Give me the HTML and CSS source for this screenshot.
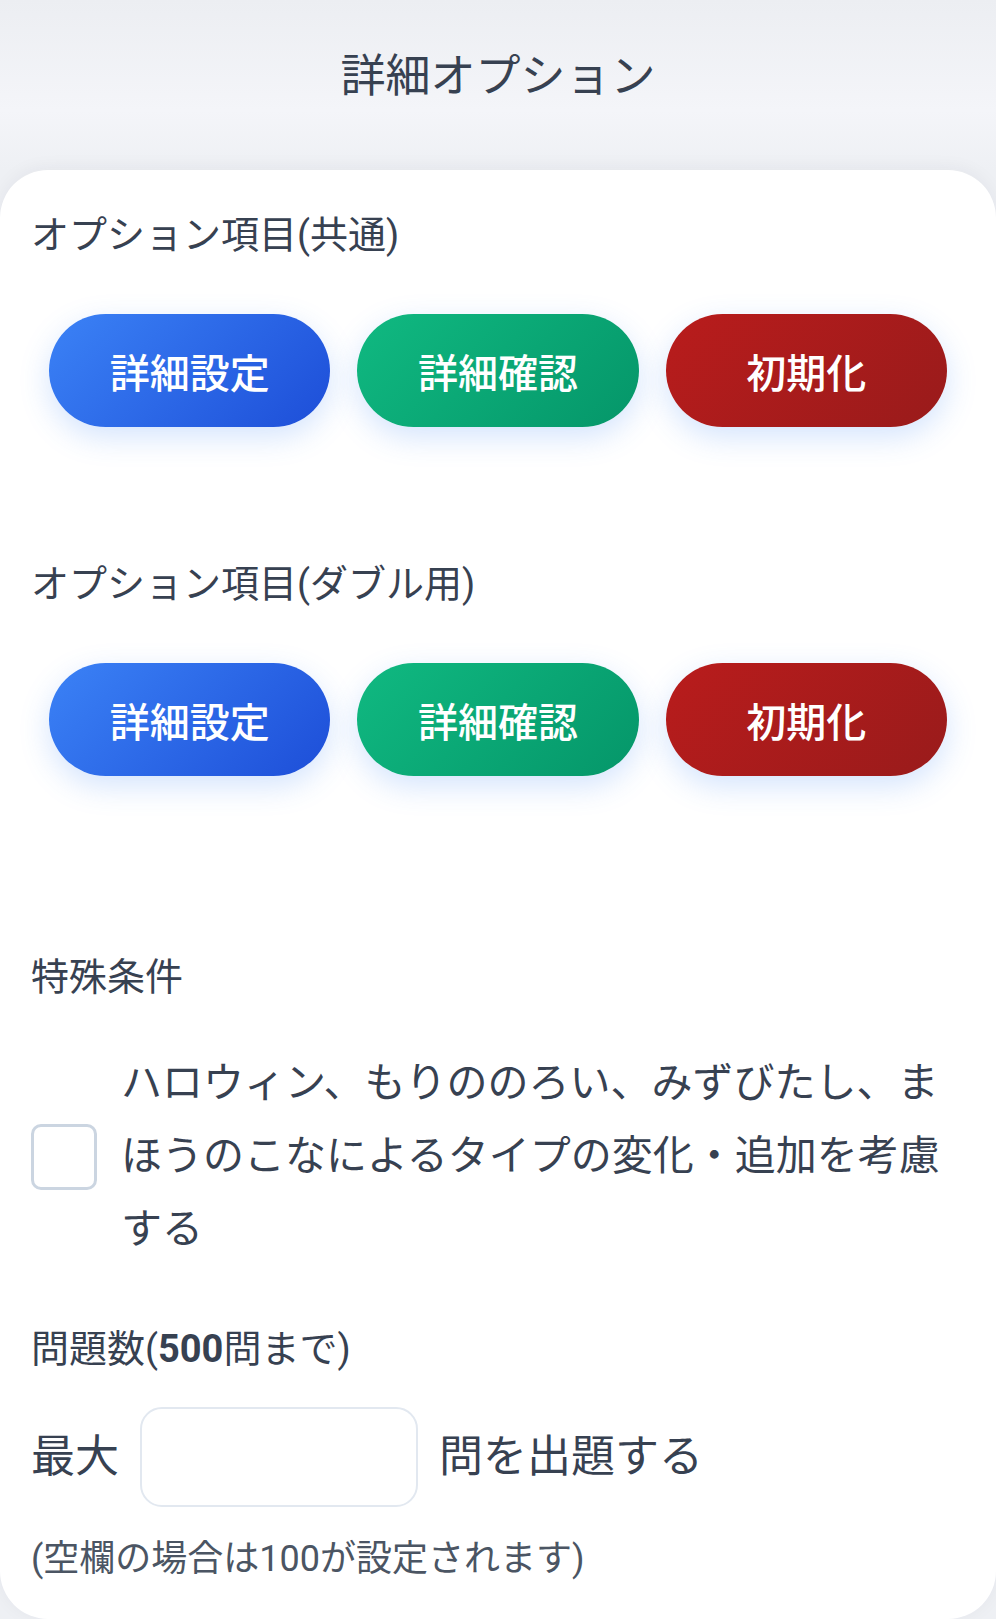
FILE: index.html
```html
<!DOCTYPE html>
<html lang="ja">
<head>
<meta charset="utf-8">
<title>詳細オプション</title>
<link rel="stylesheet" href="styles.css">
</head>
<body>
<header class="page-header">
  <h1 class="page-title">詳細オプション</h1>
</header>
<main class="card">
  <section class="option-block">
    <h2 class="section-label">オプション項目(共通)</h2>
    <div class="btn-row">
      <button class="btn btn-blue">詳細設定</button>
      <button class="btn btn-green">詳細確認</button>
      <button class="btn btn-red">初期化</button>
    </div>
  </section>
  <section class="option-block second">
    <h2 class="section-label">オプション項目(ダブル用)</h2>
    <div class="btn-row">
      <button class="btn btn-blue">詳細設定</button>
      <button class="btn btn-green">詳細確認</button>
      <button class="btn btn-red">初期化</button>
    </div>
  </section>
  <section class="special">
    <h2 class="section-label">特殊条件</h2>
    <label class="check-row">
      <input type="checkbox" class="check-box">
      <span class="check-text">ハロウィン、もりののろい、みずびたし、まほうのこなによるタイプの変化・追加を考慮する</span>
    </label>
  </section>
  <section class="count">
    <h2 class="section-label">問題数(<b>500</b>問まで)</h2>
    <div class="count-row">
      <span>最大</span>
      <input type="text" class="count-input">
      <span>問を出題する</span>
    </div>
    <p class="note">(空欄の場合は100が設定されます)</p>
  </section>
</main>
</body>
</html>
```

FILE: styles.css
```css
* { box-sizing: border-box; }

html, body {
  margin: 0;
  padding: 0;
}

body {
  font-family: Roboto, "Noto Sans CJK JP", sans-serif;
  color: #374151;
  background: linear-gradient(180deg, #eceef2 0px, #f4f5f9 110px, #eef0f4 170px, #eef0f4 100%);
  min-height: 1619px;
}

.page-header {
  height: 170px;
  display: flex;
  align-items: center;
  justify-content: center;
}

.page-title {
  margin: 0 0 16px 0;
  font-size: 45px;
  font-weight: 400;
  line-height: 60px;
  color: #374151;
}

.card {
  background: #ffffff;
  border-radius: 48px;
  min-height: 1447px;
  padding: 37px 31px 36px 31px;
  box-shadow: 0 -2px 18px rgba(30, 41, 59, 0.05);
}

.section-label {
  margin: 0;
  font-size: 38px;
  font-weight: 400;
  line-height: 57px;
  color: #374151;
}

.section-label b {
  font-weight: 700;
}

.btn-row {
  margin-top: 50px;
  padding: 0 18px;
  display: grid;
  grid-template-columns: repeat(3, 1fr);
  column-gap: 27px;
}

.btn {
  height: 113px;
  border: none;
  border-radius: 57px;
  font-family: Roboto, "Noto Sans CJK JP", sans-serif;
  font-size: 40px;
  font-weight: 500;
  color: #ffffff;
  box-shadow: 0 10px 30px rgba(59, 130, 246, 0.22);
  padding: 0;
}

.btn-blue { background: linear-gradient(135deg, #3b82f6, #1d4ed8); }
.btn-green { background: linear-gradient(135deg, #10b981, #059669); }
.btn-red { background: linear-gradient(135deg, #b91c1c, #991b1b); }

.option-block.second {
  margin-top: 129px;
}

.special {
  margin-top: 173px;
}

.check-row {
  margin-top: 41px;
  padding-right: 20px;
  display: flex;
  align-items: center;
  gap: 24px;
}

.check-box {
  appearance: none;
  -webkit-appearance: none;
  margin: 0;
  flex: 0 0 66px;
  width: 66px;
  height: 66px;
  border: 3px solid #cbd5e1;
  border-radius: 10px;
  background: #ffffff;
}

.check-text {
  font-size: 41px;
  line-height: 73px;
  color: #374151;
}

.count {
  margin-top: 55px;
}

.count-row {
  margin-top: 29px;
  display: flex;
  align-items: center;
  gap: 21px;
  font-size: 44px;
  line-height: 60px;
  color: #374151;
}

.count-input {
  width: 278px;
  height: 100px;
  border: 2px solid #e2e8f0;
  border-radius: 22px;
  background: #ffffff;
  font-size: 40px;
  padding: 0 20px;
}

.note {
  margin: 28px 0 0 0;
  font-size: 36px;
  line-height: 48px;
  color: #4b5563;
}
```
